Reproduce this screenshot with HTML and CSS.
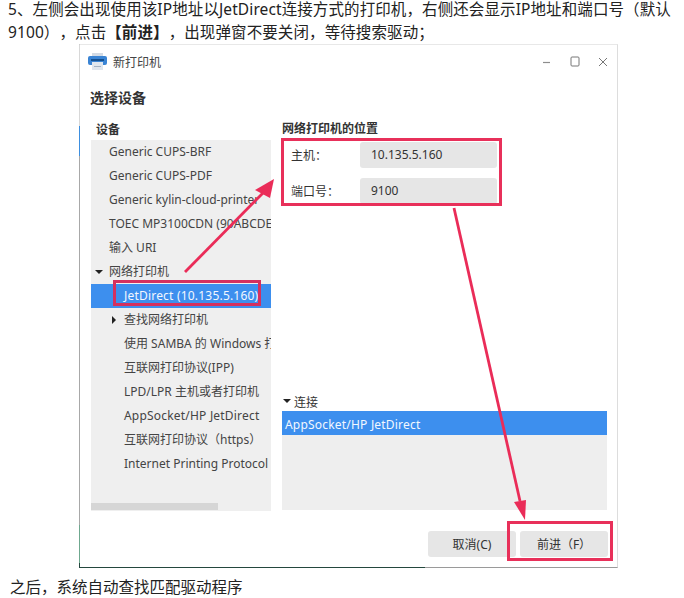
FILE: index.html
```html
<!DOCTYPE html>
<html lang="zh-CN">
<head>
  <meta charset="utf-8">
  <title>新打印机</title>
  <link rel="stylesheet" href="styles.css">
</head>
<body>
  <p class="step">5、左侧会出现使用该IP地址以JetDirect连接方式的打印机，右侧还会显示IP地址和端口号（默认9100），点击<b>【前进】</b>，出现弹窗不要关闭，等待搜索驱动；</p>

  <div class="window">
    <div class="titlebar">
      <svg class="app-icon" width="19" height="18" viewBox="0 0 19 18">
        <rect x="4" y="0" width="11" height="3" fill="#d3dbe5"/>
        <rect x="0" y="3" width="19" height="9" rx="2" fill="#3a84d4"/>
        <rect x="3" y="6" width="13" height="2" fill="#14508f"/>
        <rect x="4" y="9" width="11" height="8" fill="#dfe6ee"/>
        <rect x="6" y="13" width="7" height="1" fill="#a3b2c4"/>
      </svg>
      <span class="title">新打印机</span>
      <div class="win-btns">
        <svg width="10" height="10" viewBox="0 0 10 10"><path d="M1 5.5h7" stroke="#8d8d8d" stroke-width="1.2"/></svg>
        <svg width="10" height="11" viewBox="0 0 10 11"><rect x="1" y="1" width="8" height="9" rx="1" fill="none" stroke="#777" stroke-width="1"/></svg>
        <svg width="10" height="10" viewBox="0 0 10 10"><path d="M1 1l8 8M9 1l-8 8" stroke="#777" stroke-width="1"/></svg>
      </div>
    </div>

    <h2 class="page-title">选择设备</h2>

    <div class="columns">
      <div class="col-left">
        <div class="col-label">设备</div>
        <div class="device-list">
          <div class="row ind1">Generic CUPS-BRF</div>
          <div class="row ind1">Generic CUPS-PDF</div>
          <div class="row ind1">Generic kylin-cloud-printer</div>
          <div class="row ind1">TOEC MP3100CDN (90ABCDE.</div>
          <div class="row ind1">输入 URI</div>
          <div class="row ind1"><i class="tri-down"></i>网络打印机</div>
          <div class="row ind2 selected wide">JetDirect (10.135.5.160)</div>
          <div class="row ind2"><i class="tri-right"></i>查找网络打印机</div>
          <div class="row ind2">使用 SAMBA 的 Windows 打印机</div>
          <div class="row ind2">互联网打印协议(IPP)</div>
          <div class="row ind2">LPD/LPR 主机或者打印机</div>
          <div class="row ind2 wide">AppSocket/HP JetDirect</div>
          <div class="row ind2">互联网打印协议（https）</div>
          <div class="row ind2">Internet Printing Protocol</div>
          <div class="scrollbar"></div>
        </div>
      </div>

      <div class="col-right">
        <div class="col-label">网络打印机的位置</div>
        <div class="form-row">
          <label>主机：</label>
          <div class="field">10.135.5.160</div>
        </div>
        <div class="form-row">
          <label>端口号：</label>
          <div class="field">9100</div>
        </div>
        <div class="conn-label"><i class="tri-down"></i>连接</div>
        <div class="conn-list">
          <div class="conn-row wide">AppSocket/HP JetDirect</div>
        </div>
      </div>
    </div>

    <div class="footer">
      <button>取消(C)</button>
      <button>前进（F）</button>
    </div>

    <!-- annotations drawn on top of the screenshot -->
    <div class="mark mark-item"></div>
    <div class="mark mark-form"></div>
    <div class="mark mark-next"></div>
    <svg class="arrows" width="539" height="523" viewBox="0 0 539 523">
      <path d="M106 228L184 149" stroke="#ea2c58" stroke-width="2.8" fill="none"/>
      <path d="M195 135L176 146L191 154Z" fill="#ea2c58"/>
      <path d="M375 164L441 457" stroke="#ea2c58" stroke-width="2.8" fill="none"/>
      <path d="M446 476L435 458L447 456Z" fill="#ea2c58"/>
    </svg>
  </div>

  <p class="after">之后，系统自动查找匹配驱动程序</p>
</body>
</html>
```

FILE: styles.css
```css
body {
  margin: 0;
  background: #fff;
  font-family: "Noto Sans", "Noto Sans CJK SC", sans-serif;
  color: #222;
  text-spacing-trim: space-all;
}

.step {
  margin: -2px 0 0;
  padding: 0 8px;
  font-size: 15.5px;
  line-height: 23px;
  letter-spacing: 0.1px;
}

.window {
  position: relative;
  box-sizing: border-box;
  width: 539px;
  height: 524px;
  margin-left: 79px;
  background: #fff;
  border-left: 1px solid #b5b5b5;
  border-right: 1px solid #ddd;
  border-top: 1px solid #e8e8e8;
  border-bottom: 1px solid #9a9a9a;
  font-size: 12px;
  color: #333;
}

/* the left edge of the window changes colour along its height */
.window::before {
  content: "";
  position: absolute;
  left: -1px;
  top: 0;
  bottom: -1px;
  width: 1px;
  background: linear-gradient(#d8d8d8 0, #d8d8d8 81px, #3d8fe0 81px, #3d8fe0 111px, #a8a8a8 111px, #a8a8a8 480px, #6fa88f 480px, #6fa88f 518px, #24483e 518px);
}

.window::after {
  content: "";
  position: absolute;
  left: -1px;
  bottom: -1px;
  width: 346px;
  height: 1px;
  background: #24483e;
}

.titlebar {
  display: flex;
  align-items: center;
  height: 33px;
  padding-left: 8px;
  padding-right: 9px;
}

.title {
  margin-left: 6px;
  color: #444;
}

.win-btns {
  display: flex;
  gap: 18px;
  align-items: center;
  margin-left: auto;
}

.page-title {
  margin: 9px 0 0 10px;
  font-size: 14px;
  line-height: 22px;
  font-weight: 700;
  color: #333;
}

.columns {
  display: flex;
  gap: 11px;
  margin: 13px 10px 0 11px;
}

.col-left {
  width: 180px;
}

.col-right {
  width: 326px;
}

.col-label {
  height: 18px;
  padding-left: 5px;
  line-height: 16px;
  font-weight: 700;
}

.col-right .col-label {
  padding-left: 0;
  margin-top: -1px;
  margin-bottom: 1px;
}

.device-list {
  position: relative;
  height: 371px;
  overflow: hidden;
  background: #efefef;
}

.row {
  position: relative;
  height: 24px;
  line-height: 24px;
  white-space: nowrap;
  color: #444;
}

.wide {
  letter-spacing: 0.2px;
}

.ind1 {
  padding-left: 18px;
}

.ind2 {
  padding-left: 33px;
}

.selected {
  background: #3d8fee;
  color: #f2f7ff;
}

.tri-down,
.tri-right {
  position: absolute;
  width: 0;
  height: 0;
}

.tri-down {
  left: 4px;
  top: 10px;
  border-left: 4px solid transparent;
  border-right: 4px solid transparent;
  border-top: 4px solid #222;
}

.tri-right {
  left: 21px;
  top: 8px;
  border-top: 4px solid transparent;
  border-bottom: 4px solid transparent;
  border-left: 4px solid #222;
}

.scrollbar {
  position: absolute;
  left: 0;
  bottom: 1px;
  width: 127px;
  height: 7px;
  background: #d6d6d6;
}

.form-row {
  display: flex;
  align-items: center;
  height: 26px;
  margin-top: 10px;
  padding-left: 9px;
}

.col-label + .form-row {
  margin-top: 3px;
}

.form-row label {
  width: 69px;
}

.field {
  box-sizing: border-box;
  width: 137px;
  height: 26px;
  padding-left: 11px;
  line-height: 26px;
  border-radius: 3px;
  background: #e6e6e6;
}

.conn-label {
  position: relative;
  height: 17px;
  margin-top: 190px;
  padding-left: 12px;
  line-height: 17px;
}

.conn-label .tri-down {
  left: 1px;
  top: 5px;
}

.conn-list {
  height: 99px;
  background: #eee;
}

.conn-row {
  height: 24px;
  padding-left: 3px;
  line-height: 27px;
  background: #3d8fee;
  color: #f2f7ff;
}

.footer {
  display: flex;
  justify-content: flex-end;
  gap: 4px;
  margin: 20px 9px 0 0;
}

.footer button {
  width: 88px;
  height: 26px;
  padding: 0;
  border: 0;
  border-radius: 3px;
  background: #e6e6e6;
  color: #333;
  font: inherit;
}

.mark {
  position: absolute;
  box-sizing: border-box;
  border: 3px solid #e8305a;
}

.mark-item {
  left: 33px;
  top: 235px;
  width: 148px;
  height: 26px;
  border-color: #d4305f;
}

.mark-form {
  left: 201px;
  top: 93px;
  width: 221px;
  height: 68px;
}

.mark-next {
  left: 427px;
  top: 476px;
  width: 106px;
  height: 40px;
}

.arrows {
  position: absolute;
  left: -1px;
  top: -1px;
  pointer-events: none;
}

.after {
  margin: 9px 0 0 10px;
  font-size: 15.5px;
  line-height: 20px;
  color: #222;
}
```
